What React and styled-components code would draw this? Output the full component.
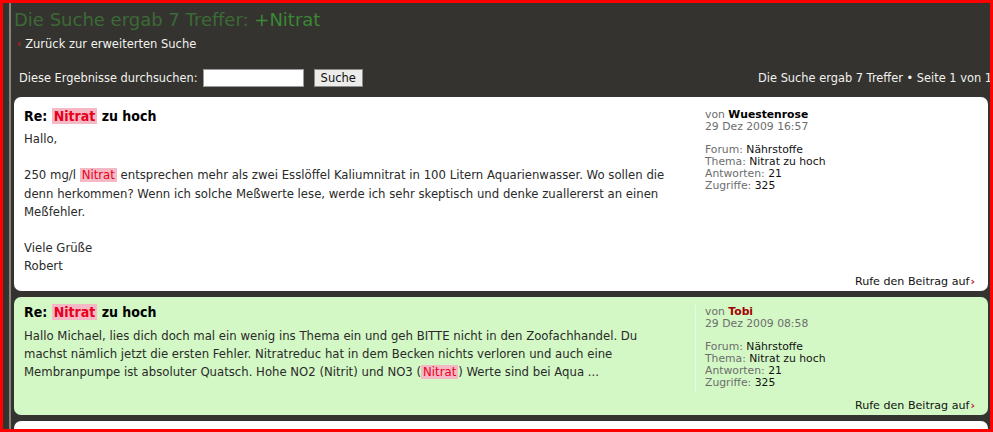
import styled, { createGlobalStyle } from "styled-components"

const GlobalStyle = createGlobalStyle`
  html, body {
    margin: 0;
    padding: 0;
    background: #34332f;
  }
  * {
    box-sizing: border-box;
  }
`

const Frame = styled.div`
  width: 993px;
  height: 432px;
  border: 3px solid #ff0000;
  background: #34332f;
  overflow: hidden;
  font-family: "DejaVu Sans", Verdana, sans-serif;
`

const Page = styled.div`
  margin-left: 6px;
  height: 100%;
  border-left: 2px solid #85847f;
  padding-left: 3px;
  padding-right: 2px;
`

const Title = styled.h1`
  margin: 0;
  padding-top: 6px;
  font-family: "DejaVu Sans", sans-serif;
  font-weight: normal;
  font-size: 18px;
  line-height: 22px;
  color: #3c6a36;
  white-space: nowrap;

  strong {
    font-weight: normal;
    color: #3a8834;
  }
`

const BackLink = styled.a`
  display: flex;
  align-items: center;
  gap: 4px;
  margin-top: 5px;
  padding-left: 3px;
  font-size: 11.5px;
  line-height: 16px;
  color: #f2f2ee;
  text-decoration: none;
`

const Arrow = styled.span`
  color: #d01a1a;
  font-size: 10px;
  font-weight: bold;
`

const SearchBar = styled.div`
  display: flex;
  align-items: center;
  margin-top: 16px;
  height: 20px;
  padding-left: 5px;
  font-size: 11.4px;
  color: #f2f2ee;
  white-space: nowrap;
`

const SearchInput = styled.input`
  width: 101px;
  height: 18px;
  margin-left: 5px;
  border: 1px solid #9a9a9a;
  background: #fff;
  padding: 0 2px;
`

const SearchButton = styled.button`
  height: 18px;
  margin-left: 10px;
  padding: 0 6px;
  border: 1px solid #8c8c8c;
  background: #ececea;
  font-family: "DejaVu Sans", sans-serif;
  font-size: 11.5px;
  color: #111;
`

const Summary = styled.span`
  margin-left: auto;
  margin-right: -4px;
`

const Posts = styled.div`
  display: flex;
  flex-direction: column;
  gap: 6px;
  margin-top: 9px;
`

const Post = styled.div`
  display: flex;
  flex-direction: column;
  border-radius: 7px;
  background: ${(p) => (p.$alt ? "#d3f8c5" : "#ffffff")};
  padding: ${(p) => (p.$alt ? "4px" : "8px")} 10px 3px 10px;
  min-height: ${(p) => p.$height || 0}px;
`

const PostMain = styled.div`
  display: flex;
`

const PostBody = styled.div`
  flex: 1;
  padding-right: 17px;
`

const PostTitle = styled.h3`
  margin: 1px 0 0 0;
  font-family: "DejaVu Sans Condensed", "DejaVu Sans", sans-serif;
  font-size: 14px;
  line-height: 20px;
  font-weight: bold;
  color: #000;
`

const Content = styled.div`
  margin-top: ${(p) => (p.$alt ? "5px" : "4px")};
  font-family: "DejaVu Sans", sans-serif;
  font-size: 11.7px;
  line-height: 18.2px;
  color: #2a2a2a;
`

const Mark = styled.span`
  background: #f5b9c6;
  color: #e8001c;
  padding: 0 2px;
`

const Meta = styled.div`
  width: 283px;
  flex-shrink: 0;
  align-self: flex-start;
  margin-top: ${(p) => (p.$alt ? "4px" : "3px")};
  padding: 1px 0 3px 9px;
  border-left: 1px solid ${(p) => (p.$alt ? "#eafae2" : "#ffffff")};
  font-size: 10.8px;
  line-height: 12px;
  color: #6d6d6d;
`

const MetaGap = styled.div`
  height: 11px;
`

const Value = styled.span`
  color: #111;
`

const Author = styled.b`
  color: ${(p) => (p.$red ? "#a40000" : "#000")};
`

const PostFooter = styled.div`
  margin-top: auto;
  text-align: right;
  font-size: 11.1px;
  line-height: 12px;
  color: #111;
  padding-right: 3px;
`

const FooterArrow = styled.span`
  color: #c8102e;
  font-weight: bold;
  margin-left: 1px;
`

function PostMeta({ author, red, date, alt }) {
  return (
    <Meta $alt={alt}>
      <div>
        von <Author $red={red}>{author}</Author>
      </div>
      <div>{date}</div>
      <MetaGap />
      <div>
        Forum: <Value>Nährstoffe</Value>
      </div>
      <div>
        Thema: <Value>Nitrat zu hoch</Value>
      </div>
      <div>
        Antworten: <Value>21</Value>
      </div>
      <div>
        Zugriffe: <Value>325</Value>
      </div>
    </Meta>
  )
}

export default function App() {
  return (
    <>
      <GlobalStyle />
      <Frame>
        <Page>
          <Title>
            Die Suche ergab 7 Treffer: <strong>+Nitrat</strong>
          </Title>
          <BackLink href="#">
            <Arrow>‹</Arrow>
            Zurück zur erweiterten Suche
          </BackLink>
          <SearchBar>
            Diese Ergebnisse durchsuchen:
            <SearchInput type="text" />
            <SearchButton>Suche</SearchButton>
            <Summary>Die Suche ergab 7 Treffer • Seite 1 von 1</Summary>
          </SearchBar>

          <Posts>
            <Post $height={194}>
              <PostMain>
                <PostBody>
                  <PostTitle>
                    Re: <Mark>Nitrat</Mark> zu hoch
                  </PostTitle>
                  <Content>
                    Hallo,
                    <br />
                    <br />
                    250 mg/l <Mark>Nitrat</Mark> entsprechen mehr als zwei
                    Esslöffel Kaliumnitrat in 100 Litern Aquarienwasser. Wo
                    sollen die denn herkommen? Wenn ich solche Meßwerte lese,
                    werde ich sehr skeptisch und denke zuallererst an einen
                    Meßfehler.
                    <br />
                    <br />
                    Viele Grüße
                    <br />
                    Robert
                  </Content>
                </PostBody>
                <PostMeta author="Wuestenrose" date="29 Dez 2009 16:57" />
              </PostMain>
              <PostFooter>
                Rufe den Beitrag auf<FooterArrow>›</FooterArrow>
              </PostFooter>
            </Post>

            <Post $alt $height={118}>
              <PostMain>
                <PostBody>
                  <PostTitle>
                    Re: <Mark>Nitrat</Mark> zu hoch
                  </PostTitle>
                  <Content $alt>
                    Hallo Michael, lies dich doch mal ein wenig ins Thema ein
                    und geh BITTE nicht in den Zoofachhandel. Du machst nämlich
                    jetzt die ersten Fehler. Nitratreduc hat in dem Becken
                    nichts verloren und auch eine Membranpumpe ist absoluter
                    Quatsch. Hohe NO2 (Nitrit) und NO3 (<Mark>Nitrat</Mark>)
                    Werte sind bei Aqua ...
                  </Content>
                </PostBody>
                <PostMeta alt red author="Tobi" date="29 Dez 2009 08:58" />
              </PostMain>
              <PostFooter>
                Rufe den Beitrag auf<FooterArrow>›</FooterArrow>
              </PostFooter>
            </Post>

            <Post $height={60}>
              <PostTitle>
                Re: <Mark>Nitrat</Mark> zu hoch
              </PostTitle>
            </Post>
          </Posts>
        </Page>
      </Frame>
    </>
  )
}
